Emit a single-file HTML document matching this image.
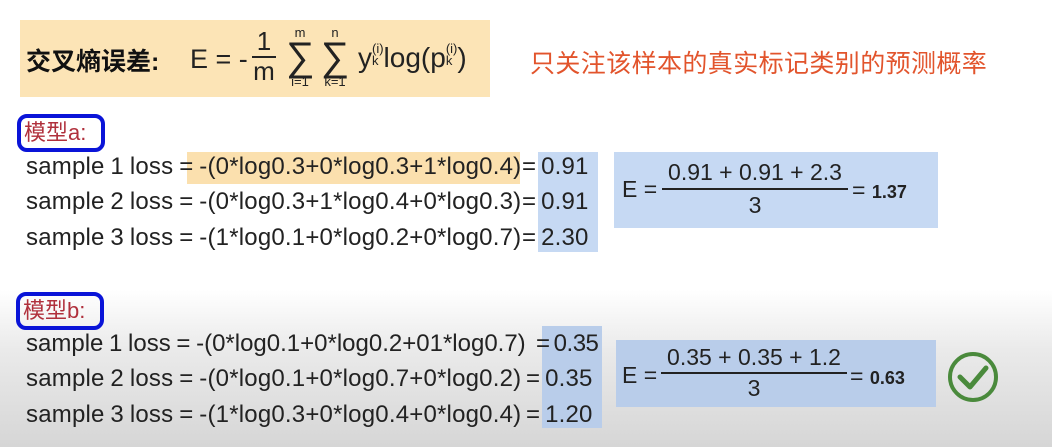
<!DOCTYPE html>
<html><head><meta charset="utf-8"><style>
body{margin:0;width:1052px;height:447px;overflow:hidden;position:relative;font-family:"Liberation Sans","Noto Sans CJK SC",sans-serif;color:#222;
background:linear-gradient(to bottom,#fff 0,#fff 290px,#eaeaea 350px,#d6d6d6 447px);}
.a{position:absolute;white-space:nowrap}
.ln{font-size:24px;letter-spacing:0.2px;word-spacing:-1px;line-height:30px}
.v{word-spacing:-2px}
.hb{position:absolute;background:#c6d9f3}
.eb{position:absolute;background:#b9cdea}
.tag{position:absolute;border:4px solid #0a14d8;border-radius:10px;color:#b0303c;font-size:22px;line-height:30px;padding:0 3px;box-sizing:border-box}
</style></head><body>
<div class="a" style="left:20px;top:20px;width:470px;height:77px;background:#fce4b6"></div>
<div class="a" style="left:26px;top:42px;font-size:25px;font-weight:bold;color:#111">交叉熵误差:</div>
<div class="a" style="left:190px;top:44px;font-size:27px">E = -</div>
<div class="a" style="left:252px;top:28px;font-size:26px;text-align:center;width:24px;line-height:26px">1<div style="border-top:2.5px solid #222;margin-top:2px"></div>m</div>
<div class="a" style="left:286px;top:26px;font-size:13px;width:28px;text-align:center;line-height:13px">m<div style="font-size:40px;line-height:36px">∑</div>i=1</div>
<div class="a" style="left:320px;top:26px;font-size:13px;width:30px;text-align:center;line-height:13px">n<div style="font-size:40px;line-height:36px">∑</div>k=1</div>
<div class="a" style="left:358px;top:42px;font-size:28px">y<span style="font-size:13px;display:inline-block;line-height:12px;vertical-align:2px">(i)<br>k</span>log(p<span style="font-size:13px;display:inline-block;line-height:12px;vertical-align:2px">(i)<br>k</span>)</div>
<div class="a" style="left:530px;top:44px;font-size:25px;color:#e2542c;letter-spacing:0.4px">只关注该样本的真实标记类别的预测概率</div>

<div class="tag" style="left:17px;top:114px;width:88px;height:38px">模型a:</div>
<div class="a" style="left:187px;top:152px;width:333px;height:32px;background:#fbe0ae"></div>
<div class="hb" style="left:538px;top:152px;width:60px;height:100px"></div>
<div class="a ln" style="left:26px;top:152px">sample 1 loss = -(0*log0.3+0*log0.3+1*log0.4)</div>
<div class="a ln v" style="left:522px;top:152px">= 0.91</div>
<div class="a ln" style="left:26px;top:187px">sample 2 loss = -(0*log0.3+1*log0.4+0*log0.3)</div>
<div class="a ln v" style="left:522px;top:187px">= 0.91</div>
<div class="a ln" style="left:26px;top:223px">sample 3 loss = -(1*log0.1+0*log0.2+0*log0.7)</div>
<div class="a ln v" style="left:522px;top:223px">= 2.30</div>
<div class="hb" style="left:614px;top:152px;width:324px;height:76px"></div>
<div class="a" style="left:622px;top:176px;font-size:23px">E =</div>
<div class="a" style="left:662px;top:159px;width:186px;text-align:center;font-size:23px;line-height:27px">0.91 + 0.91 + 2.3<div style="border-top:2.5px solid #222;margin:2px 0"></div>3</div>
<div class="a" style="left:852px;top:177px;font-size:23px">= <b style="font-size:18px">1.37</b></div>

<div class="tag" style="left:16px;top:292px;width:88px;height:38px">模型b:</div>
<div class="eb" style="left:542px;top:326px;width:60px;height:102px"></div>
<div class="a ln" style="left:26px;top:329px;letter-spacing:0">sample 1 loss = -(0*log0.1+0*log0.2+01*log0.7)</div>
<div class="a ln v" style="left:536px;top:329px;letter-spacing:-0.5px">= 0.35</div>
<div class="a ln" style="left:26px;top:364px">sample 2 loss = -(0*log0.1+0*log0.7+0*log0.2)</div>
<div class="a ln v" style="left:526px;top:364px">= 0.35</div>
<div class="a ln" style="left:26px;top:400px">sample 3 loss = -(1*log0.3+0*log0.4+0*log0.4)</div>
<div class="a ln v" style="left:526px;top:400px">= 1.20</div>
<div class="eb" style="left:616px;top:340px;width:320px;height:67px"></div>
<div class="a" style="left:622px;top:362px;font-size:23px">E =</div>
<div class="a" style="left:661px;top:345px;width:186px;text-align:center;font-size:23px;line-height:25px">0.35 + 0.35 + 1.2<div style="border-top:2.5px solid #222;margin:2px 0"></div>3</div>
<div class="a" style="left:850px;top:363px;font-size:23px">= <b style="font-size:18px">0.63</b></div>
<svg class="a" style="left:946px;top:350px" width="54" height="54" viewBox="0 0 54 54"><circle cx="27" cy="27" r="23" fill="none" stroke="#4a8a3c" stroke-width="4"/><path d="M14 27 L24 37 L40 18" fill="none" stroke="#4a8a3c" stroke-width="5" stroke-linecap="round" stroke-linejoin="round"/></svg>
</body></html>
